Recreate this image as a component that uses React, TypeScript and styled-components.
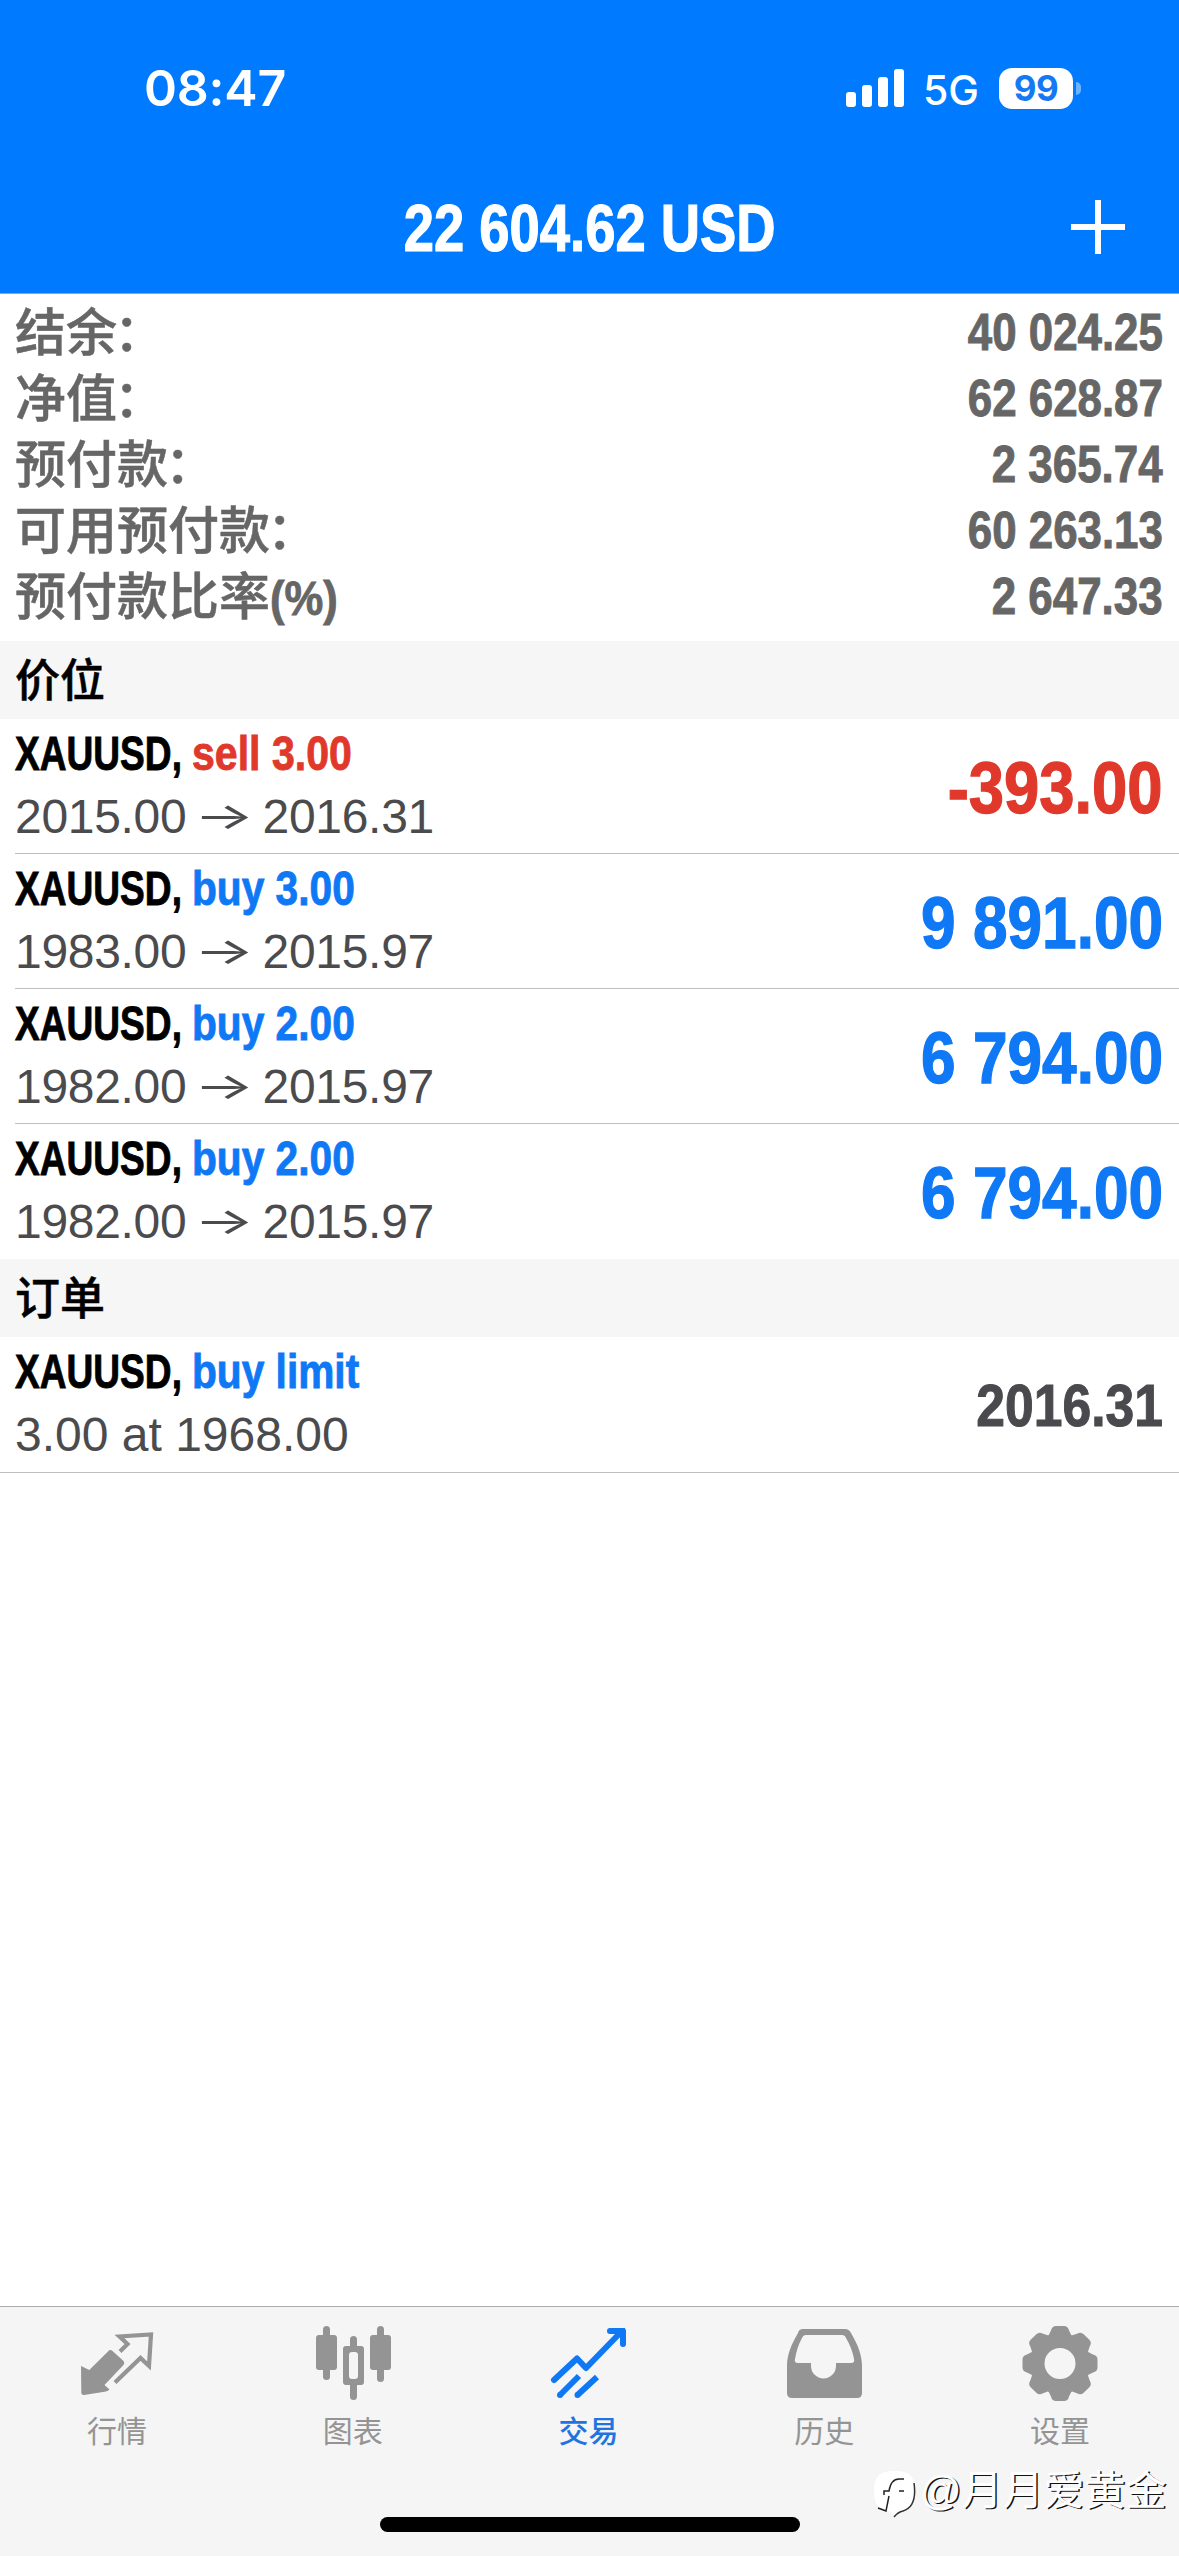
import React from 'react';
import styled, { createGlobalStyle } from 'styled-components';

const Global = createGlobalStyle`
  * { box-sizing: border-box; }
  body { margin: 0; background: #fff; font-family: "Liberation Sans", "Noto Sans CJK SC", sans-serif; }
`;

const Screen = styled.div`
  width: 1179px;
  height: 2556px;
  display: flex;
  flex-direction: column;
  background: #fff;
  overflow: hidden;
`;

const Header = styled.header`
  height: 294px;
  flex: none;
  background: #007aff;
  border-bottom: 1px solid #7fa9d8;
  color: #fff;
`;

const StatusBar = styled.div`
  height: 160px;
  padding: 16px 98px 0 144px;
  display: flex;
  align-items: center;
  justify-content: space-between;
`;

const Clock = styled.span`
  font: 600 50px/60px Inter, sans-serif;
  letter-spacing: -0.2px;
`;

const Indicators = styled.div`
  display: flex;
  align-items: center;
`;

const Network = styled.span`
  font: 450 41px/44px Inter, sans-serif;
  width: 58px;
  margin: 3px 18px 0 18px;
`;

const Battery = styled.span`
  width: 74px;
  height: 41px;
  border-radius: 13px;
  background: #fff;
  color: #1479f2;
  font: 700 35px/41px Inter, sans-serif;
  letter-spacing: -0.5px;
  text-align: center;
`;

const BatteryNub = styled.span`
  width: 5px;
  height: 13px;
  margin-left: 3px;
  border-radius: 0 5px 5px 0;
  background: #6cb3ff;
`;

const TitleBar = styled.div`
  height: 133px;
  display: grid;
  grid-template-columns: 200px 1fr 200px;
  align-items: center;
`;

const Narrow = styled.span<{ $size: number; $scale: number; $origin?: string }>`
  display: inline-block;
  white-space: pre;
  font-weight: 700;
  font-size: ${p => p.$size}px;
  -webkit-text-stroke: ${p => p.$size * 0.018}px currentColor;
  transform: scaleX(${p => p.$scale});
  transform-origin: ${p => p.$origin ?? 'left'} center;
`;

const Title = styled.h1`
  grid-column: 2;
  margin: 0;
  padding-top: 14px;
  text-align: center;
  line-height: 76px;
`;

const AddButton = styled.button`
  justify-self: end;
  margin-right: 54px;
  padding: 0;
  border: 0;
  background: none;
  width: 54px;
  height: 54px;
`;

const Summary = styled.section`
  height: 347px;
  padding: 5px 16px 0 15px;
  color: #666;
`;

const SummaryRow = styled.div`
  height: 66px;
  display: flex;
  align-items: center;
  justify-content: space-between;
`;

const SummaryLabel = styled.span`
  padding-top: 3px;
  font-weight: 500;
  font-size: 51px;
  line-height: 63px;
  -webkit-text-stroke: 0.5px currentColor;
  white-space: nowrap;
`;

const Colon = styled.span`
  margin-left: -3px;
`;

const SectionHead = styled.h2`
  margin: 0;
  height: 78px;
  padding: 2px 0 0 15px;
  background: #f6f6f6;
  color: #000;
  font-weight: 500;
  font-size: 45px;
  line-height: 78px;
  -webkit-text-stroke: 0.5px currentColor;
`;

const Row = styled.div<{ $line: 'inset' | 'full' | 'none' }>`
  height: ${p => (p.$line === 'full' ? 136 : 135)}px;
  margin-left: ${p => (p.$line === 'inset' ? 15 : 0)}px;
  padding: 0 16px 0 ${p => (p.$line === 'inset' ? 0 : 15)}px;
  border-bottom: ${p => (p.$line === 'none' ? 'none' : '1px solid #bfbfc2')};
  display: flex;
  justify-content: space-between;
`;

const Details = styled.div`
  padding-top: 4px;
`;

const Instrument = styled.div`
  height: 62px;
  line-height: 61px;
  display: flex;
`;

const Symbol = styled.div`
  width: 177px;
  color: #000;
`;

const tones = { buy: '#0f78f5', sell: '#e0392c', idle: '#4a4a4e' };
type Tone = keyof typeof tones;

const Side = styled.div<{ $tone: Tone }>`
  color: ${p => tones[p.$tone]};
`;

const Prices = styled.div<{ $spacing?: number }>`
  height: 64px;
  line-height: 64px;
  font-size: 48px;
  letter-spacing: ${p => p.$spacing ?? -0.3}px;
  color: #4b4b4e;
  white-space: pre;
`;

const Arrow = styled.span`
  display: inline-block;
  width: 50px;
  text-align: center;
  font-family: Inter, sans-serif;
  line-height: 50px;
  transform: scale(1.32, 0.78);
`;

const Result = styled.div<{ $tone: Tone }>`
  padding-top: 2px;
  line-height: 134px;
  color: ${p => tones[p.$tone]};
`;

const Footer = styled.footer`
  margin-top: auto;
  height: 250px;
  flex: none;
  background: #f5f5f5;
  border-top: 1px solid #adadad;
  position: relative;
`;

const Tabs = styled.nav`
  margin: 0 1px 0 -1px;
  display: grid;
  grid-template-columns: repeat(5, 1fr);
`;

const Tab = styled.a<{ $active?: boolean }>`
  display: flex;
  flex-direction: column;
  align-items: center;
  padding-top: 17px;
  color: ${p => (p.$active ? '#1f74e0' : '#949494')};
  font-weight: ${p => (p.$active ? 500 : 400)};
  font-size: 30px;
  line-height: 40px;
  svg { display: block; margin-bottom: 8px; }
`;

const HomeIndicator = styled.div`
  width: 420px;
  height: 15px;
  border-radius: 8px;
  background: #000;
  position: absolute;
  left: 380px;
  bottom: 24px;
`;

const Watermark = styled.div`
  position: absolute;
  left: 873px;
  top: 162px;
  display: flex;
  align-items: flex-start;
  gap: 4px;
  color: #fff;
  font-size: 41px;
  line-height: 44px;
  text-shadow: 1.5px 1px 0 #111;
  white-space: nowrap;
`;

const QuotesIcon = () => (
  <svg width="80" height="80" viewBox="0 0 80 80" fill="none">
    <path d="M4 42L12.300 46L31 27.500Q33 25 35.500 27L46 36.500Q48.500 39 46 41.500L27.500 61L32.500 65.500Q31 67 29 67.500L7 71Q4.300 71 4.300 68.500z" fill="#949494" />
    <path d="M43 27.500L50.500 20L42.500 12.500L74 10.500L72 42L63.500 34L38 58.500" stroke="#949494" strokeWidth="4.200" />
  </svg>
);

const ChartIcon = () => (
  <svg width="80" height="80" viewBox="0 0 80 80" fill="#949494">
    <rect x="10" y="2" width="7" height="54" rx="3.5" />
    <rect x="3" y="11" width="21" height="35" rx="3" />
    <rect x="64" y="2" width="7" height="56" rx="3.5" />
    <rect x="57" y="11" width="21" height="35" rx="3" />
    <rect x="37" y="12" width="7" height="64" rx="3.5" />
    <rect x="30" y="22" width="21" height="39" rx="3" />
    <rect x="36" y="28" width="9" height="27" rx="3" fill="#f5f5f5" />
  </svg>
);

const TradeIcon = () => (
  <svg width="80" height="80" viewBox="0 0 80 80" fill="none" stroke="#0f78f5" strokeWidth="6" strokeLinejoin="round">
    <path d="M6 56L29 34.500 38 44 73 8" strokeLinecap="round" />
    <path d="M62 7H75V20" strokeLinecap="round" />
    <path d="M66 6L77 17V4z" fill="#0f78f5" stroke="none" />
    <path d="M12 71L31 52M29.500 71L49 53" />
    <circle cx="12" cy="71" r="3" fill="#0f78f5" stroke="none" />
    <circle cx="29.500" cy="71" r="3" fill="#0f78f5" stroke="none" />
  </svg>
);

const HistoryIcon = () => (
  <svg width="80" height="80" viewBox="0 0 80 80">
    <path fillRule="evenodd" fill="#949494" d="M19 5H61q4 0 6 4C74 21 78 31 78 42V69q0 5-5 5H8q-5 0-5-5V42C3 31 7 21 14 9q1-4 5-4zM22 11q-3 0-4 3Q13 23 11 35q-1 4 3 4H27v3a12.500 12.500 0 0 0 25 0V39H67q4 0 3-4Q68 24 62 14q-1-3-4-3z" />
  </svg>
);

const SettingsIcon = () => (
  <svg width="80" height="80" viewBox="-40 -39.500 80 80" fill="#949494">
    {[0, 45, 90, 135, 180, 225, 270, 315].map(a => (
      <path key={a} transform={`rotate(${a})`} d="M-14-25Q-11-28-9-33Q-8-37.500-4-37.500H4Q8-37.500 9-33Q11-28 14-25z" />
    ))}
    <path fillRule="evenodd" d="M0-30A30 30 0 1 0 0 30A30 30 0 1 0 0-30zM0-15.500A15.500 15.500 0 1 1 0 15.500A15.500 15.500 0 1 1 0-15.500z" />
  </svg>
);

const FollowmeLogo = () => (
  <svg width="43" height="50" viewBox="0 0 43 50" fill="none">
    <path d="M22 2C37 2 42 8 42 22C42 34 38 41 26 43L21 47L18 43L10 40C4 38 1 33 1 22C1 8 6 2 22 2z" fill="#fff" />
    <path d="M41 14C43 28 40 39 30 42Q25 43 21 48" stroke="#333" strokeWidth="1.500" />
    <path d="M11 26V22H16Q18 10 26 10H31M16 27L13 42L5 39M26 22H31" stroke="#222" strokeWidth="1.500" />
  </svg>
);

const summary = [
  { label: '结余', colon: true, value: '40 024.25' },
  { label: '净值', colon: true, value: '62 628.87' },
  { label: '预付款', colon: true, value: '2 365.74' },
  { label: '可用预付款', colon: true, value: '60 263.13' },
  { label: '预付款比率', colon: false, value: '2 647.33' },
];

const positions: { side: Tone; volume: string; open: string; now: string; profit: string }[] = [
  { side: 'sell', volume: '3.00', open: '2015.00', now: '2016.31', profit: '-393.00' },
  { side: 'buy', volume: '3.00', open: '1983.00', now: '2015.97', profit: '9 891.00' },
  { side: 'buy', volume: '2.00', open: '1982.00', now: '2015.97', profit: '6 794.00' },
  { side: 'buy', volume: '2.00', open: '1982.00', now: '2015.97', profit: '6 794.00' },
];

const tabs = [
  ['行情', QuotesIcon],
  ['图表', ChartIcon],
  ['交易', TradeIcon],
  ['历史', HistoryIcon],
  ['设置', SettingsIcon],
] as const;

const Heading = ({ tone, text }: { tone: Tone; text: string }) => (
  <Instrument>
    <Symbol><Narrow $size={49} $scale={0.757}>XAUUSD,</Narrow></Symbol>
    <Side $tone={tone}><Narrow $size={49} $scale={tone === 'sell' ? 0.838 : 0.83}>{text}</Narrow></Side>
  </Instrument>
);

export default function App() {
  return (
    <Screen>
      <Global />
      <Header>
        <StatusBar>
          <Clock>08:47</Clock>
          <Indicators>
            <svg width="59" height="38" viewBox="0 0 59 38" fill="#fff">
              <rect x="0" y="23" width="10" height="15" rx="3" />
              <rect x="16" y="16" width="10" height="22" rx="3" />
              <rect x="32" y="8" width="10" height="30" rx="3" />
              <rect x="48" y="0" width="10" height="38" rx="3" />
            </svg>
            <Network>5G</Network>
            <Battery>99</Battery>
            <BatteryNub />
          </Indicators>
        </StatusBar>
        <TitleBar>
          <Title><Narrow $size={66} $scale={0.824} $origin="center">22 604.62 USD</Narrow></Title>
          <AddButton aria-label="add">
            <svg width="54" height="54" viewBox="0 0 54 54" stroke="#fff" strokeWidth="6" style={{ display: 'block' }}>
              <path d="M27 0V54M0 27H54" />
            </svg>
          </AddButton>
        </TitleBar>
      </Header>
      <Summary>
        {summary.map(({ label, colon, value }) => (
          <SummaryRow key={label}>
            <SummaryLabel>
              {label}
              {colon ? <Colon>：</Colon> : <Narrow $size={49} $scale={0.89}>(%)</Narrow>}
            </SummaryLabel>
            <Narrow $size={51} $scale={0.86} $origin="right">{value}</Narrow>
          </SummaryRow>
        ))}
      </Summary>
      <SectionHead>价位</SectionHead>
      {positions.map((p, i) => (
        <Row key={i} $line={i === 3 ? 'none' : 'inset'}>
          <Details>
            <Heading tone={p.side} text={`${p.side} ${p.volume}`} />
            <Prices>{p.open} <Arrow>→</Arrow> {p.now}</Prices>
          </Details>
          <Result $tone={p.side}>
            <Narrow $size={73} $scale={p.side === 'sell' ? 0.868 : 0.852} $origin="right">{p.profit}</Narrow>
          </Result>
        </Row>
      ))}
      <SectionHead>订单</SectionHead>
      <Row $line="full">
        <Details>
          <Heading tone="buy" text="buy limit" />
          <Prices $spacing={0}>3.00 at 1968.00</Prices>
        </Details>
        <Result $tone="idle"><Narrow $size={60} $scale={0.86} $origin="right">2016.31</Narrow></Result>
      </Row>
      <Footer>
        <Tabs>
          {tabs.map(([name, Icon]) => (
            <Tab key={name} $active={name === '交易'}><Icon />{name}</Tab>
          ))}
        </Tabs>
        <HomeIndicator />
        <Watermark><FollowmeLogo />@月月爱黄金</Watermark>
      </Footer>
    </Screen>
  );
}
